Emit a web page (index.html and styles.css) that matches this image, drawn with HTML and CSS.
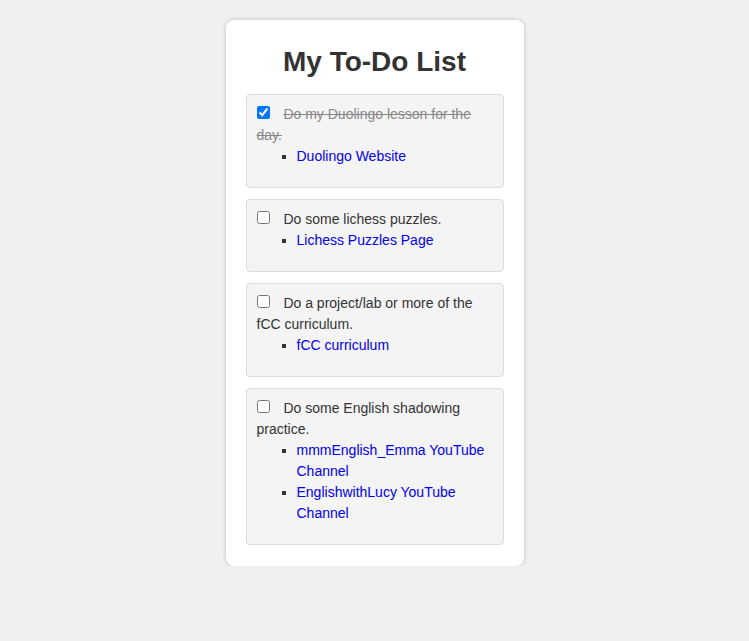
FILE: index.html
```html
<!DOCTYPE html>
<html lang="en">
<head>
<meta charset="utf-8">
<title>My To-Do List</title>
<link rel="stylesheet" href="styles.css">
</head>
<body>
<main class="card">
  <h1 class="title">My To-Do List</h1>
  <ul class="todo-list">
    <li class="todo-item">
      <input type="checkbox" class="check" id="t1" checked>
      <label for="t1" class="task done">Do my Duolingo lesson for the day.</label>
      <ul class="links">
        <li><a href="#">Duolingo Website</a></li>
      </ul>
    </li>
    <li class="todo-item">
      <input type="checkbox" class="check" id="t2">
      <label for="t2" class="task">Do some lichess puzzles.</label>
      <ul class="links">
        <li><a href="#">Lichess Puzzles Page</a></li>
      </ul>
    </li>
    <li class="todo-item">
      <input type="checkbox" class="check" id="t3">
      <label for="t3" class="task">Do a project/lab or more of the fCC curriculum.</label>
      <ul class="links">
        <li><a href="#">fCC curriculum</a></li>
      </ul>
    </li>
    <li class="todo-item">
      <input type="checkbox" class="check" id="t4">
      <label for="t4" class="task">Do some English shadowing practice.</label>
      <ul class="links">
        <li><a href="#">mmmEnglish_Emma YouTube Channel</a></li>
        <li><a href="#">EnglishwithLucy YouTube Channel</a></li>
      </ul>
    </li>
  </ul>
</main>
</body>
</html>
```
FILE: styles.css
```css
html, body {
  margin: 0;
  padding: 0;
}
body {
  background: #f0f0f0;
  font-family: "Liberation Sans", Arial, sans-serif;
  font-size: 14px;
  line-height: 21px;
  color: #333;
  padding-top: 20px;
}
.card {
  box-sizing: border-box;
  width: 298px;
  margin: 0 auto;
  background: #fff;
  border-radius: 8px;
  box-shadow: 0 0 4px rgba(0, 0, 0, 0.22);
  padding: 20px 20px 21px;
}
.title {
  font-size: 28px;
  line-height: 32px;
  font-weight: bold;
  text-align: center;
  color: #333;
  margin: 6px 0 16px;
}
.todo-list {
  list-style: none;
  margin: 0;
  padding: 0;
  display: flex;
  flex-direction: column;
  gap: 11px;
}
.todo-item {
  background: #f4f4f4;
  border: 1px solid #dcdcdc;
  border-radius: 4px;
  padding: 9px 10px 10px;
}
.check {
  width: 13px;
  height: 13px;
  margin: 0 10px 0 0;
  vertical-align: 0;
}
.task {
  color: #333;
}
.task.done {
  color: #888;
  text-decoration: line-through;
}
.links {
  list-style: square;
  margin: 0 0 10px;
  padding-left: 40px;
}
.links a {
  color: #0000ee;
  text-decoration: none;
}
```
